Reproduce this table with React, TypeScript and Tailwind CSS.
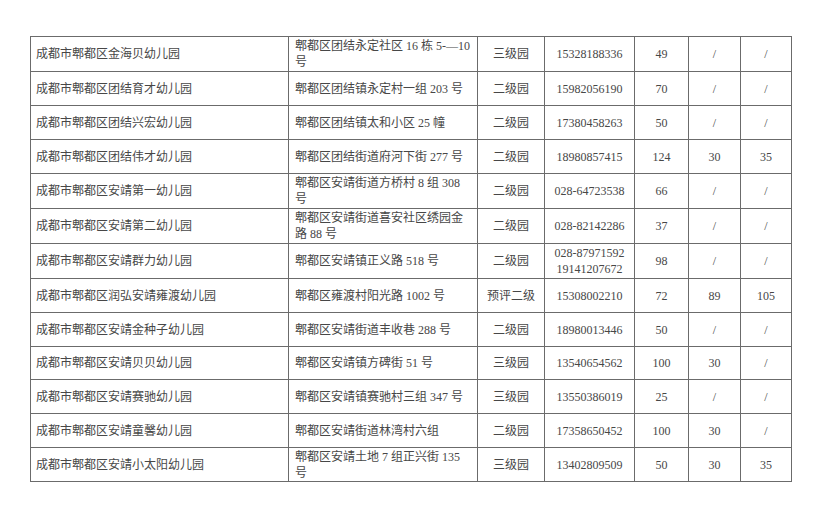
type Row = {
  name: string;
  addr: string[];
  level: string;
  phone: string[];
  n1: string;
  n2: string;
  n3: string;
  h: string;
};

const rows: Row[] = [
  { name: "成都市郫都区金海贝幼儿园", addr: ["郫都区团结永定社区 16 栋 5-—10", "号"], level: "三级园", phone: ["15328188336"], n1: "49", n2: "/", n3: "/", h: "h-[35px]" },
  { name: "成都市郫都区团结育才幼儿园", addr: ["郫都区团结镇永定村一组 203 号"], level: "二级园", phone: ["15982056190"], n1: "70", n2: "/", n3: "/", h: "h-[34px]" },
  { name: "成都市郫都区团结兴宏幼儿园", addr: ["郫都区团结镇太和小区 25 幢"], level: "二级园", phone: ["17380458263"], n1: "50", n2: "/", n3: "/", h: "h-[34px]" },
  { name: "成都市郫都区团结伟才幼儿园", addr: ["郫都区团结街道府河下街 277 号"], level: "二级园", phone: ["18980857415"], n1: "124", n2: "30", n3: "35", h: "h-[34px]" },
  { name: "成都市郫都区安靖第一幼儿园", addr: ["郫都区安靖街道方桥村 8 组 308", "号"], level: "二级园", phone: ["028-64723538"], n1: "66", n2: "/", n3: "/", h: "h-[35px]" },
  { name: "成都市郫都区安靖第二幼儿园", addr: ["郫都区安靖街道喜安社区绣园金", "路 88 号"], level: "二级园", phone: ["028-82142286"], n1: "37", n2: "/", n3: "/", h: "h-[35px]" },
  { name: "成都市郫都区安靖群力幼儿园", addr: ["郫都区安靖镇正义路 518 号"], level: "二级园", phone: ["028-87971592", "19141207672"], n1: "98", n2: "/", n3: "/", h: "h-[35px]" },
  { name: "成都市郫都区润弘安靖雍渡幼儿园", addr: ["郫都区雍渡村阳光路 1002 号"], level: "预评二级", phone: ["15308002210"], n1: "72", n2: "89", n3: "105", h: "h-[34px]" },
  { name: "成都市郫都区安靖金种子幼儿园", addr: ["郫都区安靖街道丰收巷 288 号"], level: "二级园", phone: ["18980013446"], n1: "50", n2: "/", n3: "/", h: "h-[34px]" },
  { name: "成都市郫都区安靖贝贝幼儿园", addr: ["郫都区安靖镇方碑街 51 号"], level: "三级园", phone: ["13540654562"], n1: "100", n2: "30", n3: "/", h: "h-[33px]" },
  { name: "成都市郫都区安靖赛驰幼儿园", addr: ["郫都区安靖镇赛驰村三组 347 号"], level: "三级园", phone: ["13550386019"], n1: "25", n2: "/", n3: "/", h: "h-[34px]" },
  { name: "成都市郫都区安靖童馨幼儿园", addr: ["郫都区安靖街道林湾村六组"], level: "二级园", phone: ["17358650452"], n1: "100", n2: "30", n3: "/", h: "h-[34px]" },
  { name: "成都市郫都区安靖小太阳幼儿园", addr: ["郫都区安靖土地 7 组正兴街 135", "号"], level: "三级园", phone: ["13402809509"], n1: "50", n2: "30", n3: "35", h: "h-[34px]" },
];

const cell = "border-r border-[#6b6b6b] flex flex-col justify-center shrink-0";

export default function App() {
  return (
    <div
      className="w-[829px] h-[513px] bg-white pt-[36px] pl-[30px] text-[12px] leading-[16px] text-[#474747]"
      style={{ fontFamily: '"Liberation Serif", "Noto Sans CJK SC", serif' }}
    >
      <div className="w-[762px] border-l border-t border-[#6b6b6b]">
        {rows.map((r) => (
          <div key={r.name} className={`flex border-b border-[#6b6b6b] ${r.h}`}>
            <div className={`${cell} w-[258px] pl-[5px]`}>{r.name}</div>
            <div className={`${cell} w-[189px] pl-[6px]`}>
              {r.addr.map((l) => (
                <span key={l} className="whitespace-nowrap">{l}</span>
              ))}
            </div>
            <div className={`${cell} w-[67px] items-center`}>{r.level}</div>
            <div className={`${cell} w-[90px] items-center`}>
              {r.phone.map((p) => (
                <span key={p}>{p}</span>
              ))}
            </div>
            <div className={`${cell} w-[54px] items-center`}>{r.n1}</div>
            <div className={`${cell} w-[52px] items-center`}>{r.n2}</div>
            <div className={`${cell} w-[51px] items-center`}>{r.n3}</div>
          </div>
        ))}
      </div>
    </div>
  );
}
